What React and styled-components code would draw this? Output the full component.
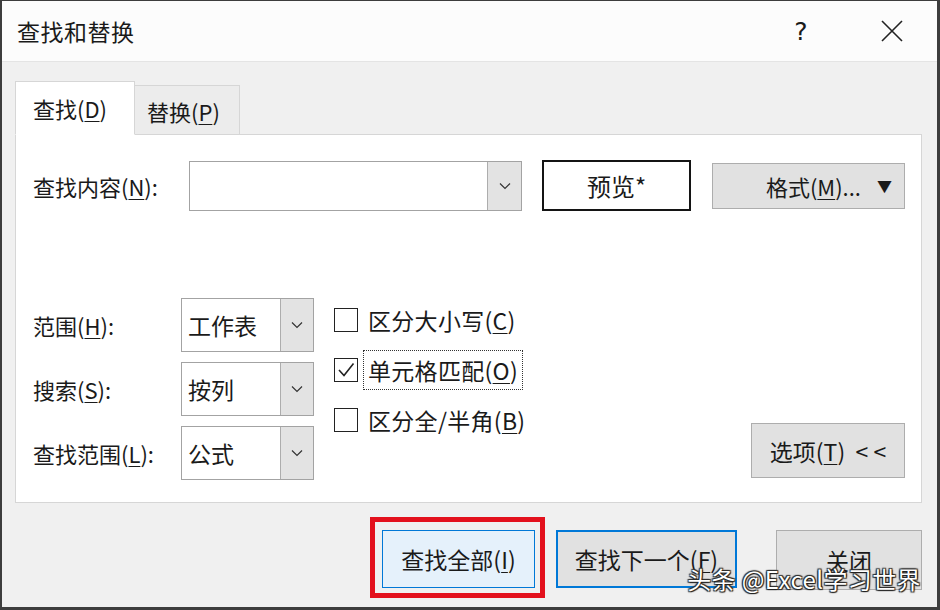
import React from "react";
import styled, { createGlobalStyle } from "styled-components";

const GlobalStyle = createGlobalStyle`
  html, body {
    margin: 0;
    padding: 0;
    background: #ffffff;
  }
  body {
    font-family: "Noto Sans CJK SC", "Noto Sans", sans-serif;
    color: #1a1a1a;
  }
  * {
    box-sizing: border-box;
  }
`;

const Window = styled.div`
  position: relative;
  width: 940px;
  height: 610px;
  display: flex;
  flex-direction: column;
  background: #f0f0f0;
  border-style: solid;
  border-color: #3d3d3d;
  border-width: 1px 3px 3px 2px;
  overflow: hidden;
`;

const TitleBar = styled.div`
  height: 61px;
  flex: none;
  display: flex;
  align-items: center;
  padding-left: 15px;
  background: #fcfcfc;
  border-bottom: 1px solid #e4e4e4;
`;

const Title = styled.div`
  font-size: 23px;
  flex: 1;
  letter-spacing: 0.5px;
`;

const TitleButton = styled.div`
  width: ${(p) => p.$w}px;
  height: 60px;
  display: flex;
  align-items: center;
  justify-content: center;
  font-family: "DejaVu Sans", sans-serif;
  font-size: 25px;
  color: #1a1a1a;
`;

const Body = styled.div`
  flex: 1;
  display: flex;
  flex-direction: column;
  padding: 19px 15px 0 13px;
`;

const TabStrip = styled.div`
  display: flex;
  align-items: flex-end;
  height: 54px;
  position: relative;
  z-index: 1;
  margin-bottom: -1px;
`;

const Tab = styled.div`
  display: flex;
  align-items: center;
  font-size: 22px;
  width: ${(p) => (p.$active ? 120 : 105)}px;
  height: ${(p) => (p.$active ? 54 : 50)}px;
  padding-left: ${(p) => (p.$active ? 17 : 12)}px;
  padding-top: ${(p) => (p.$active ? 0 : 2)}px;
  background: ${(p) => (p.$active ? "#ffffff" : "#ececec")};
  border: 1px solid #d6d6d6;
  border-bottom-color: ${(p) => (p.$active ? "#ffffff" : "#d6d6d6")};
  border-left-width: ${(p) => (p.$active ? 1 : 0)}px;
`;

const Key = styled.span`
  text-decoration: underline;
  text-underline-offset: 3px;
  text-decoration-thickness: 1px;
`;

const Panel = styled.div`
  height: 369px;
  background: #ffffff;
  border: 1px solid #d6d6d6;
  padding: 25px 16px 0 17px;
  display: flex;
  flex-direction: column;
`;

const TopRow = styled.div`
  display: flex;
  align-items: center;
  height: 51px;
`;

const Label = styled.div`
  width: ${(p) => p.$w}px;
  flex: none;
  font-size: 22px;
  white-space: nowrap;
`;

const Combo = styled.div`
  width: ${(p) => p.$w}px;
  height: ${(p) => p.$h}px;
  flex: none;
  display: flex;
  border: 1px solid #a3a3a3;
  background: #ffffff;
`;

const ComboText = styled.div`
  flex: 1;
  display: flex;
  align-items: center;
  padding-left: 6px;
  font-size: 23px;
`;

const ComboArrow = styled.div`
  width: ${(p) => p.$w}px;
  flex: none;
  display: flex;
  align-items: center;
  justify-content: center;
  background: #e3e3e3;
  border-left: 1px solid #adadad;
`;

const PreviewButton = styled.div`
  margin-left: 20px;
  width: 149px;
  height: 51px;
  display: flex;
  align-items: center;
  justify-content: center;
  background: #ffffff;
  border: 2px solid #141414;
  font-size: 24px;
`;

const Button = styled.div`
  width: ${(p) => p.$w}px;
  height: ${(p) => p.$h}px;
  flex: none;
  display: flex;
  align-items: center;
  justify-content: ${(p) => p.$justify || "center"};
  padding: ${(p) => p.$pad || "0"};
  background: ${(p) => (p.$hover ? "#e5f1fb" : "#e1e1e1")};
  border: ${(p) => (p.$focus ? "2px solid #0078d7" : p.$hover ? "1.5px solid #0078d7" : "1px solid #adadad")};
  font-size: 23px;
  white-space: nowrap;
`;

const FormatButton = styled(Button)`
  margin-left: 21px;
  font-size: 22px;
`;

const Caret = styled.span`
  font-size: 15px;
  margin-left: 16px;
`;

const Lower = styled.div`
  display: flex;
  margin-top: 87px;
`;

const FieldColumn = styled.div`
  display: flex;
  flex-direction: column;
  gap: 10px;
`;

const FieldRow = styled.div`
  display: flex;
  align-items: center;
`;

const CheckColumn = styled.div`
  display: flex;
  flex-direction: column;
  margin-left: 20px;
  margin-top: -3px;
`;

const CheckRow = styled.div`
  display: flex;
  align-items: center;
  height: 50px;
`;

const Box = styled.div`
  width: 24px;
  height: 24px;
  flex: none;
  border: 1.5px solid #222;
  background: #fff;
  display: flex;
  align-items: center;
  justify-content: center;
`;

const CheckLabel = styled.div`
  font-size: 23px;
  letter-spacing: 0.3px;
  margin-left: ${(p) => (p.$focus ? 6 : 10)}px;
  padding: ${(p) => (p.$focus ? "2px 4px" : "0")};
  outline: ${(p) => (p.$focus ? "1px dotted #333" : "none")};
  white-space: nowrap;
`;

const OptionsButton = styled(Button)`
  margin-left: auto;
  align-self: flex-end;
  margin-bottom: 2px;
`;

const Footer = styled.div`
  flex: 1;
  display: flex;
  justify-content: flex-end;
  align-items: flex-start;
  padding-top: 14px;
`;

const Highlight = styled.div`
  flex: none;
  border: 5px solid #e3101c;
  padding: 8px 5px 5px 7px;
`;

const NextButton = styled(Button)`
  margin-left: 11px;
  margin-top: 13px;
`;

const CloseButton = styled(Button)`
  margin-left: 39px;
  margin-top: 13px;
`;

const Watermark = styled.div`
  position: absolute;
  right: 16px;
  bottom: 11px;
  font-size: 24px;
  color: #ffffff;
  letter-spacing: 0.4px;
  font-family: "Noto Sans CJK SC", "Liberation Sans", sans-serif;
  text-shadow: 0 0 1px #000, 1px 1px 1px #222, -1px -1px 1px #333, 1px -1px 1px #333,
    -1px 1px 1px #333;
`;

const Chevron = () => (
  <svg width="12" height="8" viewBox="0 0 12 8">
    <path d="M1 1.5 L6 6.5 L11 1.5" fill="none" stroke="#333" strokeWidth="1.2" />
  </svg>
);

const CloseGlyph = () => (
  <svg width="22" height="22" viewBox="0 0 22 22">
    <path d="M1 1 L21 21 M21 1 L1 21" stroke="#222" strokeWidth="1.6" fill="none" />
  </svg>
);

const CheckMark = () => (
  <svg width="20" height="20" viewBox="0 0 20 20">
    <path d="M3 10 L8 15.5 L17.5 3.5" fill="none" stroke="#222" strokeWidth="1.6" />
  </svg>
);

const fields = [
  { label: "范围", key: "H", value: "工作表" },
  { label: "搜索", key: "S", value: "按列" },
  { label: "查找范围", key: "L", value: "公式" },
];

const checks = [
  { text: "区分大小写", key: "C", checked: false },
  { text: "单元格匹配", key: "O", checked: true },
  { text: "区分全/半角", key: "B", checked: false },
];

export default function App() {
  return (
    <>
      <GlobalStyle />
      <Window>
        <TitleBar>
          <Title>查找和替换</Title>
          <TitleButton $w={92}>?</TitleButton>
          <TitleButton $w={90}>
            <CloseGlyph />
          </TitleButton>
        </TitleBar>
        <Body>
          <TabStrip>
            <Tab $active>
              查找(<Key>D</Key>)
            </Tab>
            <Tab>
              替换(<Key>P</Key>)
            </Tab>
          </TabStrip>
          <Panel>
            <TopRow>
              <Label $w={156}>
                查找内容(<Key>N</Key>):
              </Label>
              <Combo $w={333} $h={50}>
                <ComboText />
                <ComboArrow $w={34}>
                  <Chevron />
                </ComboArrow>
              </Combo>
              <PreviewButton>预览*</PreviewButton>
              <FormatButton $w={193} $h={46} $justify="flex-end" $pad="0 12px 0 0">
                格式(<Key>M</Key>)...
                <Caret>▼</Caret>
              </FormatButton>
            </TopRow>
            <Lower>
              <FieldColumn>
                {fields.map((f) => (
                  <FieldRow key={f.key}>
                    <Label $w={148}>
                      {f.label}(<Key>{f.key}</Key>):
                    </Label>
                    <Combo $w={133} $h={54}>
                      <ComboText>{f.value}</ComboText>
                      <ComboArrow $w={33}>
                        <Chevron />
                      </ComboArrow>
                    </Combo>
                  </FieldRow>
                ))}
              </FieldColumn>
              <CheckColumn>
                {checks.map((c) => (
                  <CheckRow key={c.key}>
                    <Box>{c.checked && <CheckMark />}</Box>
                    <CheckLabel $focus={c.checked}>
                      {c.text}(<Key>{c.key}</Key>)
                    </CheckLabel>
                  </CheckRow>
                ))}
              </CheckColumn>
              <OptionsButton $w={154} $h={55}>
                选项(<Key>T</Key>)&nbsp;&nbsp;&lt; &lt;
              </OptionsButton>
            </Lower>
          </Panel>
          <Footer>
            <Highlight>
              <Button $w={153} $h={58} $hover>
                查找全部(<Key>I</Key>)
              </Button>
            </Highlight>
            <NextButton $w={181} $h={58} $focus>
              查找下一个(<Key>F</Key>)
            </NextButton>
            <CloseButton $w={146} $h={60}>
              关闭
            </CloseButton>
          </Footer>
        </Body>
        <Watermark>头条 @Excel学习世界</Watermark>
      </Window>
    </>
  );
}
